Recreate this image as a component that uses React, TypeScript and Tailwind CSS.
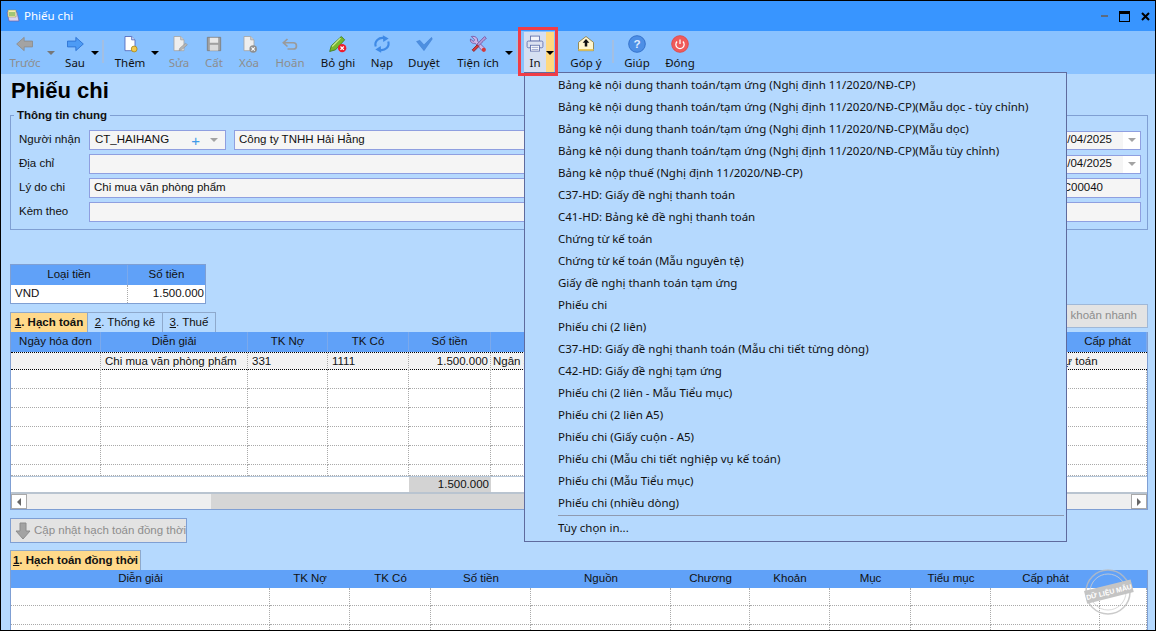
import type { ReactNode } from 'react';

const menuItems = [
  'Bảng kê nội dung thanh toán/tạm ứng (Nghị định 11/2020/NĐ-CP)',
  'Bảng kê nội dung thanh toán/tạm ứng (Nghị định 11/2020/NĐ-CP)(Mẫu dọc - tùy chỉnh)',
  'Bảng kê nội dung thanh toán/tạm ứng (Nghị định 11/2020/NĐ-CP)(Mẫu dọc)',
  'Bảng kê nội dung thanh toán/tạm ứng (Nghị định 11/2020/NĐ-CP)(Mẫu tùy chỉnh)',
  'Bảng kê nộp thuế (Nghị định 11/2020/NĐ-CP)',
  'C37-HD: Giấy đề nghị thanh toán',
  'C41-HD: Bảng kê đề nghị thanh toán',
  'Chứng từ kế toán',
  'Chứng từ kế toán (Mẫu nguyên tệ)',
  'Giấy đề nghị thanh toán tạm ứng',
  'Phiếu chi',
  'Phiếu chi (2 liên)',
  'C37-HD: Giấy đề nghị thanh toán (Mẫu chi tiết từng dòng)',
  'C42-HD: Giấy đề nghị tạm ứng',
  'Phiếu chi (2 liên - Mẫu Tiểu mục)',
  'Phiếu chi (2 liên A5)',
  'Phiếu chi (Giấy cuộn - A5)',
  'Phiếu chi (Mẫu chi tiết nghiệp vụ kế toán)',
  'Phiếu chi (Mẫu Tiểu mục)',
  'Phiếu chi (nhiều dòng)',
];

const Svg = ({ children }: { children: ReactNode }) => (
  <svg width="20" height="20" viewBox="0 0 24 24">{children}</svg>
);

const icons = {
  back: <Svg><path d="M2 12 L11 4 V8.5 H21 V15.5 H11 V20 Z" fill="#a3a3a3" stroke="#8c8c8c" /></Svg>,
  next: <Svg><path d="M22 12 L13 4 V8.5 H3 V15.5 H13 V20 Z" fill="#4d9bf5" stroke="#2a6fd0" /></Svg>,
  add: (
    <Svg>
      <path d="M6 3 H14 L18 7 V20 H6 Z" fill="#fff" stroke="#4d63b8" />
      <path d="M14 3 V7 H18" fill="#cfd8f5" stroke="#4d63b8" />
      <circle cx="17" cy="18" r="3.5" fill="#f2c94c" stroke="#a88a20" />
    </Svg>
  ),
  edit: (
    <Svg>
      <path d="M6 3 H14 L18 7 V20 H6 Z" fill="#eeeeee" stroke="#a5a5a5" />
      <path d="M14 3 V7 H18" fill="#cccccc" stroke="#a5a5a5" />
      <path d="M12 20 L13 17 L20 11 L22 13 L15 19 Z" fill="#b5b5b5" stroke="#8f8f8f" strokeWidth="0.7" />
    </Svg>
  ),
  save: (
    <Svg>
      <path d="M4 4 H20 V20 H4 Z" fill="#a0a0a0" stroke="#7c7c7c" />
      <rect x="7" y="4.5" width="10" height="6" fill="#e8e8e8" />
      <rect x="7" y="13" width="10" height="7" fill="#dadada" />
    </Svg>
  ),
  del: (
    <Svg>
      <path d="M6 3 H14 L18 7 V20 H6 Z" fill="#eeeeee" stroke="#a5a5a5" />
      <path d="M14 3 V7 H18" fill="#cccccc" stroke="#a5a5a5" />
      <circle cx="17" cy="18" r="4.5" fill="#8f8f8f" />
      <path d="M15 16 L19 20 M19 16 L15 20" stroke="#fff" strokeWidth="1.3" />
    </Svg>
  ),
  undo: (
    <Svg>
      <path d="M9 6 L4 10.5 L9 15 M4.5 10.5 H16 C21 10.5 21 18 16 18 H9" fill="none" stroke="#9a9a9a" strokeWidth="2" />
    </Svg>
  ),
  unpost: (
    <Svg>
      <path d="M2 21 L4 14 L16 3 L20 7 L9 19 Z" fill="#76b82e" stroke="#3f7a16" />
      <path d="M5 15 L15 5" stroke="#c8e88f" strokeWidth="1.5" />
      <circle cx="17" cy="17" r="5" fill="#ee1c2e" />
      <path d="M15 15 L19 19 M19 15 L15 19" stroke="#fff" strokeWidth="1.5" />
    </Svg>
  ),
  reload: (
    <Svg>
      <path d="M4.5 15 C2.5 9 8 3.5 15 5" fill="none" stroke="#3f8ae6" strokeWidth="2.6" />
      <path d="M13 1.5 L20 5.5 L13.5 9.5 Z" fill="#3f8ae6" />
      <path d="M19.5 9 C21.5 15 16 20.5 9 19" fill="none" stroke="#3f8ae6" strokeWidth="2.6" />
      <path d="M11 22.5 L4 18.5 L10.5 14.5 Z" fill="#3f8ae6" />
    </Svg>
  ),
  check: <Svg><path d="M3 9 L7 7.5 L12 13 L21 4 L22 6 L12 20 Z" fill="#4d8fe0" stroke="#3a78cc" strokeWidth="0.5" /></Svg>,
  tools: (
    <Svg>
      <path d="M4 3 L8 7 L6.5 9 L3 6 C2 10 6 12 8.5 11 L17 20 L20 17 L11.5 8.5 C12 5 9 2 4 3 Z" fill="#cdb6e8" stroke="#6f4f9e" />
      <path d="M20 3 L22 5 L18 9 L13 14 L11 12 L16 7 Z" fill="#b79ad6" stroke="#6f4f9e" />
      <path d="M11 13 L5 19 L7 21 L13 15 Z" fill="#d63a3a" stroke="#8d2020" />
      <circle cx="19" cy="19" r="2.5" fill="#d63a3a" />
    </Svg>
  ),
  print: (
    <Svg>
      <rect x="6.5" y="2.5" width="11" height="6" fill="#f3f5fb" stroke="#5c6ba8" />
      <rect x="2.5" y="8.5" width="19" height="8" rx="1.5" fill="#dde2f2" stroke="#5c6ba8" />
      <rect x="6.5" y="13.5" width="11" height="7" fill="#fff" stroke="#5c6ba8" />
      <path d="M8 16 H16 M8 18.5 H16" stroke="#8a96c6" />
    </Svg>
  ),
  feedback: (
    <Svg>
      <path d="M3 10 L12 3 L21 10 V20 H3 Z" fill="#fff5cf" stroke="#8a7a3a" />
      <path d="M3 19 H21" stroke="#e9c85a" strokeWidth="2" />
      <path d="M12 6 L16 10.5 H13.5 V15 H10.5 V10.5 H8 Z" fill="#111" />
    </Svg>
  ),
  help: (
    <Svg>
      <circle cx="12" cy="12" r="10" fill="#4d8fe6" stroke="#2d6ac4" />
      <text x="12" y="17" textAnchor="middle" fontSize="14" fontWeight="700" fill="#dfeaff" fontFamily="'Liberation Sans', sans-serif">?</text>
    </Svg>
  ),
  close: (
    <Svg>
      <circle cx="12" cy="12" r="10" fill="#f05a5a" stroke="#dd4646" />
      <path d="M8.5 9 A5 5 0 1 0 15.5 9" fill="none" stroke="#fff" strokeWidth="1.5" />
      <path d="M12 6.5 V12" stroke="#fff" strokeWidth="1.5" />
    </Svg>
  ),
};

const ToolBtn = ({ label, icon, className, disabled, caret }: {
  label: string;
  icon: ReactNode;
  className: string;
  disabled?: boolean;
  caret?: string;
}) => (
  <div className={`relative flex flex-col items-center ${className}`}>
    <div className="mt-[1px] flex h-[24px] items-center">{icon}</div>
    <span className={`leading-[14px] ${disabled ? 'text-[#8d8d8d]' : 'text-[#111]'}`}>{label}</span>
    {caret && <span className={`absolute top-[20px] border-x-[4px] border-t-[4px] border-x-transparent ${caret}`} />}
  </div>
);

const Sep = ({ className }: { className: string }) => (
  <div className={`mt-[9px] h-[23px] w-[2px] bg-[#a3bfe2] ${className}`} />
);

const Field = ({ value, className }: { value?: ReactNode; className: string }) => (
  <div className={`flex h-[20px] items-center border border-[#8f9fe0] bg-[#f5f5f5] px-[4px] pb-[1px] ${className}`}>{value}</div>
);

const DateField = ({ value }: { value: string }) => (
  <div className="flex h-[19px] w-[94px] items-center justify-between border border-[#8f9fe0] bg-[#f5f5f5]">
    <span className="ml-auto mr-[11px]">{value}</span>
    <span className="flex h-full w-[17px] items-center justify-center bg-white">
      <span className="border-x-[4px] border-t-[4px] border-x-transparent border-t-[#a3a3a3]" />
    </span>
  </div>
);

const Num = ({ n, text, bold }: { n: string; text: string; bold?: boolean }) => (
  <span className={bold ? 'font-bold' : ''}><span className="underline">{n}</span>{text}</span>
);

const HEAD1 = ['Ngày hóa đơn', 'Diễn giải', 'TK Nợ', 'TK Có', 'Số tiền', '', 'Cấp phát'];
const COLS1 = 'grid grid-cols-[90px_147px_80px_81px_82px_562px_1fr]';
const HEAD2 = ['Diễn giải', 'TK Nợ', 'TK Có', 'Số tiền', 'Nguồn', 'Chương', 'Khoản', 'Mục', 'Tiểu mục', 'Cấp phát', ''];
const COLS2 = 'grid grid-cols-[259px_80px_81px_100px_140px_79px_80px_81px_80px_109px_47px]';
const DOTTED = 'border-r border-b border-dotted border-[#a9a9a9]';

export default function App() {
  return (
    <div className="relative flex h-[631px] w-[1156px] flex-col overflow-hidden whitespace-nowrap border border-black bg-[#b5d9fe] text-[11.5px] text-[#111] [font-family:'Noto_Sans','Liberation_Sans',sans-serif]">
      {/* title bar */}
      <div className="flex h-[30px] shrink-0 items-center bg-[#3895ff] pl-[5px] text-white">
        <svg width="14" height="14" viewBox="0 0 14 14">
          <path d="M1 3 H11 L13 12 H3 Z" fill="#d9d3f0" stroke="#6d63a8" strokeWidth="0.7" />
          <path d="M2 1 H10 V8 H2 Z" fill="#f5efb0" stroke="#8d8a5a" strokeWidth="0.5" />
          <path d="M3 4 H9 M3 6 H9" stroke="#4f9e3f" />
        </svg>
        <span className="ml-[4px]">Phiếu chi</span>
        <div className="ml-auto flex items-center">
          <div className="h-[2px] w-[7px] bg-[#5b6b80]" />
          <div className="ml-[11px] h-[11px] w-[11px] border border-t-[3px] border-black" />
          <svg className="ml-[11px] mr-[5px]" width="9" height="9" viewBox="0 0 9 9">
            <path d="M1 1 L8 8 M8 1 L1 8" stroke="#000" strokeWidth="2" />
          </svg>
        </div>
      </div>

      {/* toolbar */}
      <div className="flex h-[43px] shrink-0 bg-[#8ac2ff] pl-[3px]">
        <ToolBtn label="Trước" icon={icons.back} className="w-[42px]" disabled caret="left-[43px] border-t-[#777]" />
        <ToolBtn label="Sau" icon={icons.next} className="ml-[8px] w-[42px]" caret="left-[37px] border-t-black" />
        <Sep className="ml-[6px]" />
        <ToolBtn label="Thêm" icon={icons.add} className="ml-[4px] w-[44px]" caret="left-[43px] border-t-black" />
        <ToolBtn label="Sửa" icon={icons.edit} className="ml-[10px] w-[34px]" disabled />
        <ToolBtn label="Cất" icon={icons.save} className="ml-[1px] w-[34px]" disabled />
        <ToolBtn label="Xóa" icon={icons.del} className="ml-[1px] w-[34px]" disabled />
        <ToolBtn label="Hoãn" icon={icons.undo} className="ml-[1px] w-[46px]" disabled />
        <ToolBtn label="Bỏ ghi" icon={icons.unpost} className="ml-[1px] w-[48px]" />
        <ToolBtn label="Nạp" icon={icons.reload} className="ml-[1px] w-[38px]" />
        <ToolBtn label="Duyệt" icon={icons.check} className="ml-[1px] w-[44px]" />
        <ToolBtn label="Tiện ích" icon={icons.tools} className="ml-[1px] w-[62px]" caret="left-[58px] border-t-black" />
        <Sep className="ml-[7px]" />
        <div className="relative ml-[6px] mt-[1px] flex h-[41px] w-[30px]">
          <div className="flex w-[22px] flex-col items-center bg-[#d5dff2]">
            <div className="flex h-[24px] items-center">{icons.print}</div>
            <span className="leading-[14px]">In</span>
          </div>
          <div className="flex w-[8px] justify-center bg-[#ffd97f] pt-[19px]">
            <span className="h-0 border-x-[4px] border-t-[4px] border-x-transparent border-t-black" />
          </div>
        </div>
        <Sep className="ml-[4px]" />
        <ToolBtn label="Góp ý" icon={icons.feedback} className="w-[52px]" />
        <Sep className="" />
        <ToolBtn label="Giúp" icon={icons.help} className="ml-[4px] w-[38px]" />
        <ToolBtn label="Đóng" icon={icons.close} className="ml-[2px] w-[44px]" />
      </div>

      {/* body */}
      <div className="flex min-h-0 flex-1 flex-col pl-[9px] pr-[7px] text-[11.5px] [font-family:'Liberation_Sans',sans-serif]">
        <div className="flex h-[33px] shrink-0 items-center text-[22px] font-bold text-black"><span className="ml-[1px]">Phiếu chi</span></div>

        <div className="relative mt-[8px] flex h-[115px] shrink-0 flex-col gap-[4px] border border-[#7f9fd3] pl-[8px] pr-[6px] pt-[14px]">
          <span className="absolute left-[3px] top-[-9px] bg-[#b5d9fe] px-[3px] font-bold leading-[16px]">Thông tin chung</span>
          <div className="flex h-[20px] items-center">
            <span className="w-[70px]">Người nhận</span>
            <div className="flex h-[20px] w-[137px] items-center border border-[#8f9fe0] bg-[#f5f5f5] pl-[5px]">
              <span>CT_HAIHANG</span>
              <span className="ml-auto text-[15px] leading-none text-[#3f9ae8]">+</span>
              <span className="ml-[10px] mr-[7px] border-x-[4px] border-t-[4px] border-x-transparent border-t-[#a3a3a3]" />
            </div>
            <Field value="Công ty TNHH Hải Hằng" className="ml-[8px] flex-1" />
            <div className="ml-[8px] w-[94px]"><DateField value="01/04/2025" /></div>
          </div>
          <div className="flex h-[20px] items-center">
            <span className="w-[70px]">Địa chỉ</span>
            <Field className="flex-1" />
            <div className="ml-[8px] w-[94px]"><DateField value="01/04/2025" /></div>
          </div>
          <div className="flex h-[20px] items-center">
            <span className="w-[70px]">Lý do chi</span>
            <Field value="Chi mua văn phòng phẩm" className="flex-1" />
            <Field value={<span className="ml-auto mr-[33px]">PC00040</span>} className="ml-[8px] w-[94px]" />
          </div>
          <div className="flex h-[20px] items-center">
            <span className="w-[70px]">Kèm theo</span>
            <Field className="flex-1" />
            <Field className="ml-[8px] w-[94px]" />
          </div>
        </div>

        {/* currency */}
        <div className="mt-[34px] w-[196px] shrink-0 border border-[#7f9fd3]">
          <div className="grid h-[20px] grid-cols-[117px_1fr] items-center bg-[#60a1f8] text-center">
            <span className="flex h-full items-center justify-center border-r border-[#7ba9ec]">Loại tiền</span>
            <span>Số tiền</span>
          </div>
          <div className="grid h-[18px] grid-cols-[117px_1fr] items-center bg-white">
            <span className="flex h-full items-center border-r border-dotted border-[#a9a9a9] pl-[4px]">VND</span>
            <span className="pr-[1px] text-right">1.500.000</span>
          </div>
        </div>

        {/* tabs + quick button */}
        <div className="flex h-[28px] shrink-0 justify-between">
          <div className="flex self-end">
            <div className="flex h-[20px] w-[78px] items-center justify-center border border-b-0 border-[#8ea9cc] bg-[#ffd98a]"><Num n="1" text=". Hạch toán" bold /></div>
            <div className="flex h-[20px] w-[75px] items-center justify-center border-y border-r border-b-0 border-[#8ea9cc]"><Num n="2" text=". Thống kê" /></div>
            <div className="flex h-[20px] w-[53px] items-center justify-center border-y border-r border-b-0 border-[#8ea9cc]"><Num n="3" text=". Thuế" /></div>
          </div>
          <div className="flex h-[24px] w-[140px] items-center justify-end border border-[#9fb8d8] bg-[#e3e3e3] pr-[10px] text-[#8d8d8d]">Định khoản nhanh</div>
        </div>

        {/* accounting grid */}
        <div className="h-[178px] shrink-0 border-x border-b border-[#7f9fd3] bg-white">
          <div className={`${COLS1} h-[20px] items-center bg-[#60a1f8] text-center`}>
            {HEAD1.map((h, i) => (
              <span key={i} className={`flex h-full items-center justify-center border-r border-[#7ba9ec] ${i === 6 ? 'pl-[16px]' : ''}`}>{h}</span>
            ))}
          </div>
          <div className={`${COLS1} h-[18px] items-center border-y border-dotted border-black bg-[#f2f2f2]`}>
            <span className="h-full border-r border-dotted border-[#a9a9a9]" />
            <span className="border-r border-dotted border-[#a9a9a9] pl-[4px]">Chi mua văn phòng phẩm</span>
            <span className="border-r border-dotted border-[#a9a9a9] pl-[4px]">331</span>
            <span className="border-r border-dotted border-[#a9a9a9] pl-[4px]">1111</span>
            <span className="border-r border-dotted border-[#a9a9a9] pr-[2px] text-right">1.500.000</span>
            <span className="border-r border-dotted border-[#a9a9a9] pl-[2px]">Ngân sách</span>
            <span className="pl-[3px]">Dự toán</span>
          </div>
          {[19, 19, 19, 19, 19, 11].map((h, r) => (
            <div key={r} className={COLS1} style={{ height: h }}>
              {HEAD1.map((_, i) => <span key={i} className={DOTTED} />)}
            </div>
          ))}
          <div className={`${COLS1} h-[16px] items-center border-t border-[#b5c6d9]`}>
            <span className="col-span-4" />
            <span className="h-full bg-[#d3d3d3] pr-[2px] text-right leading-[15px]">1.500.000</span>
          </div>
          <div className="flex h-[17px] border-t-2 border-[#b9c4d0] bg-[#efefef]">
            <span className="flex w-[16px] items-center justify-center border border-[#a9a9a9] bg-white">
              <span className="border-y-[4px] border-r-[4px] border-y-transparent border-r-[#666]" />
            </span>
            <span className="w-[184px]" />
            <span className="w-[800px] bg-[#d6d6d6]" />
            <span className="ml-auto flex w-[16px] items-center justify-center border border-[#a9a9a9] bg-white">
              <span className="border-y-[4px] border-l-[4px] border-y-transparent border-l-[#666]" />
            </span>
          </div>
        </div>

        <div className="mt-[8px] flex h-[25px] w-[177px] shrink-0 items-center border border-[#7f9fd3] bg-[#e3e3e3] pl-[3px] text-[#8d8d8d]">
          <svg className="shrink-0" width="18" height="18" viewBox="0 0 18 18">
            <path d="M6 1 H12 V9 H16 L9 17 L2 9 H6 Z" fill="#a3a3a3" stroke="#8c8c8c" />
          </svg>
          <span className="ml-[2px]">Cập nhật hạch toán đồng thời</span>
        </div>

        <div className="mt-[7px] flex h-[20px] w-[131px] shrink-0 items-center justify-center border border-b-0 border-[#8ea9cc] bg-[#ffd98a]"><Num n="1" text=". Hạch toán đồng thời" bold /></div>

        <div className="min-h-0 flex-1 border-x border-[#7f9fd3] bg-white">
          <div className={`${COLS2} h-[18px] items-center bg-[#60a1f8] text-center`}>
            {HEAD2.map((h, i) => <span key={i}>{h}</span>)}
          </div>
          {[18, 19, 19].map((h, r) => (
            <div key={r} className={COLS2} style={{ height: h }}>
              {HEAD2.map((_, i) => <span key={i} className={DOTTED} />)}
            </div>
          ))}
        </div>
      </div>

      {/* print menu */}
      <div className="absolute left-[523px] top-[71px] flex h-[470px] w-[543px] flex-col border border-[#5f6b9e] bg-[#b5d9fe] pl-[33px] pr-[2px] pt-[1px]">
        {menuItems.map((m) => (
          <div key={m} className="flex h-[22px] shrink-0 items-center">{m}</div>
        ))}
        <div className="mt-[1px] h-[1px] bg-[#8f9ab0]" />
        <div className="mt-[1px] flex h-[22px] items-center">Tùy chọn in...</div>
      </div>

      {/* red highlight round the print button */}
      <div className="pointer-events-none absolute left-[517px] top-[26px] h-[49px] w-[40px] border-[3px] border-[#ef3d47]" />

      {/* sample-data stamp */}
      <svg className="absolute left-[1083px] top-[566px]" width="52" height="50" viewBox="0 0 52 50">
        <circle cx="24" cy="25" r="22" fill="none" stroke="#bdbdbd" strokeWidth="1.5" strokeOpacity="0.8" />
        <circle cx="24" cy="25" r="18" fill="none" stroke="#cfcfcf" strokeOpacity="0.8" />
        <g transform="rotate(-14 25 25)">
          <rect x="1" y="18" width="48" height="13" fill="#c4c4c4" />
          <text x="25" y="27.5" textAnchor="middle" fontSize="7" fontWeight="700" fill="#fff" fontFamily="'Liberation Sans', sans-serif">DỮ LIỆU MẪU</text>
        </g>
      </svg>
    </div>
  );
}
